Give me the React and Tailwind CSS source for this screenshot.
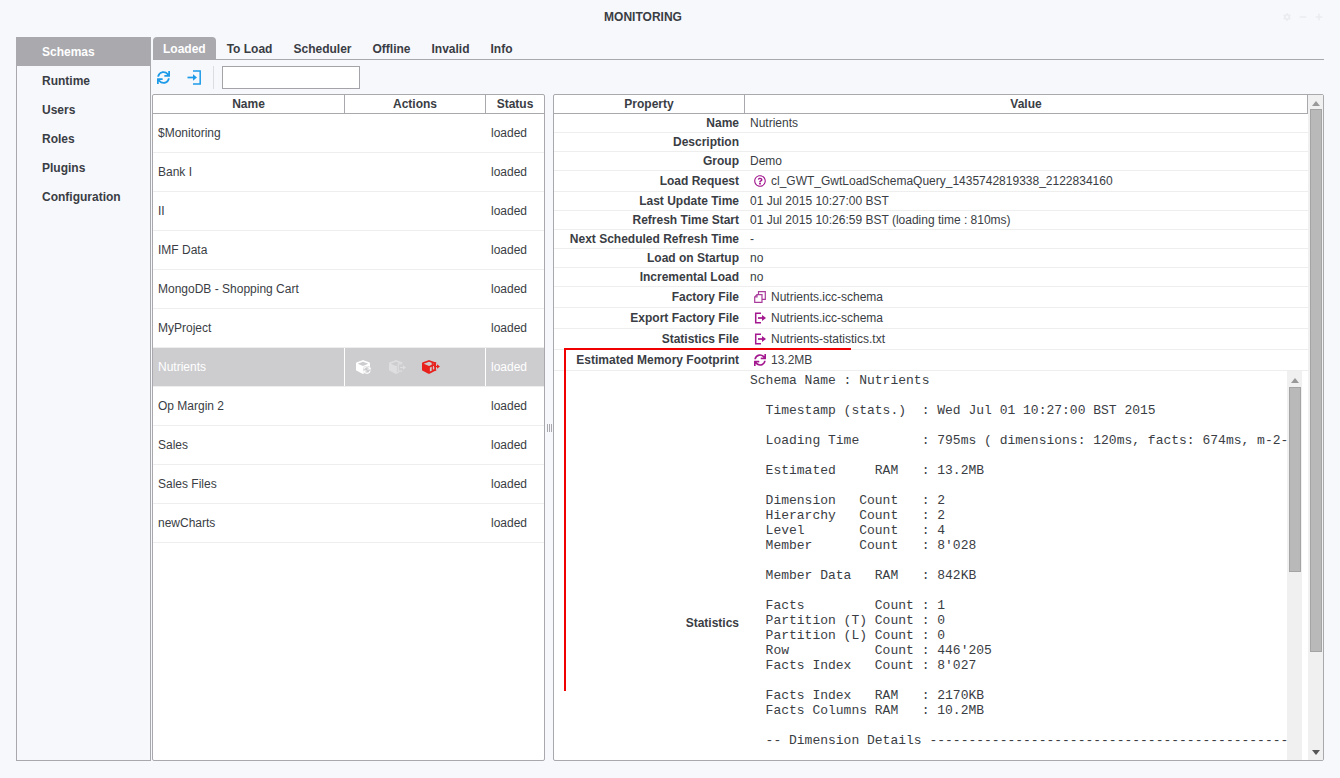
import { FaSync, FaRegQuestionCircle, FaCube, FaCog, FaMinus, FaPlus } from 'react-icons/fa';

const menu = ['Schemas', 'Runtime', 'Users', 'Roles', 'Plugins', 'Configuration'];
const tabs = ['Loaded', 'To Load', 'Scheduler', 'Offline', 'Invalid', 'Info'];
const schemas = ['$Monitoring', 'Bank I', 'II', 'IMF Data', 'MongoDB - Shopping Cart', 'MyProject', 'Nutrients', 'Op Margin 2', 'Sales', 'Sales Files', 'newCharts'];

const purple = 'text-[#a3178f]';

// bracket opening right with an arrow leaving it
function ExportIcon({ className }) {
  return (
    <svg width="12" height="12" viewBox="0 0 12 12" className={className} fill="none" stroke="currentColor">
      <path d="M7 1.2H1.7v9.6H7" strokeWidth="1.5" />
      <path d="M4 6h5" strokeWidth="1.7" />
      <polygon points="8,3 12,6 8,9" fill="currentColor" stroke="none" />
    </svg>
  );
}

// arrow going into a bracket that opens left
function ImportIcon({ className }) {
  return (
    <svg width="15" height="15" viewBox="0 0 15 15" className={className} fill="none" stroke="currentColor">
      <path d="M6 1h7.2v13H6" strokeWidth="1.5" />
      <path d="M0.5 7.5h6" strokeWidth="1.7" />
      <polygon points="6,4.2 10,7.5 6,10.8" fill="currentColor" stroke="none" />
    </svg>
  );
}

function CopyIcon({ className }) {
  return (
    <svg width="12" height="12" viewBox="0 0 12 12" className={className} fill="none" stroke="currentColor" strokeWidth="1.2">
      <path d="M4.5 3.5V0.7h6.8v7.6H8" />
      <path d="M3 3.7h5v7.6H0.7V6z" />
      <path d="M0.7 6H3V3.7" />
    </svg>
  );
}

const props = [
  { label: 'Name', value: 'Nutrients' },
  { label: 'Description', value: '' },
  { label: 'Group', value: 'Demo' },
  { label: 'Load Request', value: 'cl_GWT_GwtLoadSchemaQuery_1435742819338_2122834160', icon: <FaRegQuestionCircle size={12} className={purple} />, tall: true },
  { label: 'Last Update Time', value: '01 Jul 2015 10:27:00 BST' },
  { label: 'Refresh Time Start', value: '01 Jul 2015 10:26:59 BST (loading time : 810ms)' },
  { label: 'Next Scheduled Refresh Time', value: '-' },
  { label: 'Load on Startup', value: 'no' },
  { label: 'Incremental Load', value: 'no' },
  { label: 'Factory File', value: 'Nutrients.icc-schema', icon: <CopyIcon className="text-[#a93d9c]" />, tall: true },
  { label: 'Export Factory File', value: 'Nutrients.icc-schema', icon: <ExportIcon className={purple} />, tall: true },
  { label: 'Statistics File', value: 'Nutrients-statistics.txt', icon: <ExportIcon className={purple} />, tall: true },
  { label: 'Estimated Memory Footprint', value: '13.2MB', icon: <FaSync size={12} className={purple} />, tall: true },
];

const stats = `Schema Name : Nutrients

  Timestamp (stats.)  : Wed Jul 01 10:27:00 BST 2015

  Loading Time        : 795ms ( dimensions: 120ms, facts: 674ms, m-2-m: 0ms )

  Estimated     RAM   : 13.2MB

  Dimension   Count   : 2
  Hierarchy   Count   : 2
  Level       Count   : 4
  Member      Count   : 8'028

  Member Data   RAM   : 842KB

  Facts         Count : 1
  Partition (T) Count : 0
  Partition (L) Count : 0
  Row           Count : 446'205
  Facts Index   Count : 8'027

  Facts Index   RAM   : 2170KB
  Facts Columns RAM   : 10.2MB

  -- Dimension Details ----------------------------------------------------------------`;

function Arrow({ down }) {
  return (
    <svg width="8" height="5" viewBox="0 0 8 5" className={down ? 'text-[#555]' : 'text-[#999]'}>
      <polygon points={down ? '0,0 8,0 4,5' : '4,0 8,5 0,5'} fill="currentColor" />
    </svg>
  );
}

function CubeAction({ className, children }) {
  return (
    <span className={`relative flex h-[14px] w-[18px] items-center ${className}`}>
      <FaCube size={14} />
      {children}
    </span>
  );
}

export default function App() {
  return (
    <div className="relative h-screen overflow-hidden bg-[#f7f8fc] font-['Liberation_Sans',Arial,sans-serif] text-[12px] text-[#3a3d44]">
      <div className="relative flex h-[37px] items-start justify-center pr-[54px] pt-[10px] text-[12px] font-bold leading-[15px]">
        MONITORING
        <div className="absolute right-[17px] top-[13px] flex items-center gap-[8px] text-[#ebecf0]">
          <FaCog size={8} />
          <FaMinus size={8} />
          <FaPlus size={8} />
        </div>
      </div>

      <div className="flex h-[724px] pl-[16px] pr-[16px]">
        <div className="w-[135px] shrink-0 rounded-t-[2px] border-x border-b border-[#a9a9ad] font-bold">
          {menu.map((m, i) => (
            <div key={m} className={`flex h-[29px] items-center pl-[25px] ${i === 0 ? '-mx-px bg-[#a9a9ae] pl-[26px] text-white' : ''}`}>
              {m}
            </div>
          ))}
        </div>

        <div className="ml-px flex min-w-0 flex-1 flex-col">
          <div className="ml-px flex h-[23px] shrink-0 border-b border-[#a9a9ad] font-bold">
            {tabs.map((t, i) => (
              <div key={t} className={`mr-px flex h-[22px] items-center rounded-t-[4px] px-[10px] pt-px ${i === 0 ? 'bg-[#a9a9ae] text-white' : ''}`}>
                {t}
              </div>
            ))}
          </div>

          <div className="flex h-[34px] shrink-0 items-center pl-[5px] text-[#1e9be8]">
            <FaSync size={13} />
            <ImportIcon className="ml-[17px]" />
            <div className="ml-[11px] h-[23px] w-px bg-[#dcdde0]" />
            <div className="ml-[8px] h-[23px] w-[138px] border border-[#a4a4a8] bg-white" />
          </div>

          <div className="flex min-h-0 flex-1">
            {/* schema list */}
            <div className="w-[393px] shrink-0 overflow-hidden rounded-[2px] border border-[#a9a9ad] bg-white">
              <div className="grid h-[19px] grid-cols-[192px_141px_1fr] border-b border-[#a9a9ad] font-bold leading-[18px]">
                <div className="border-r border-[#a9a9ad] text-center">Name</div>
                <div className="border-r border-[#a9a9ad] text-center">Actions</div>
                <div className="text-center">Status</div>
              </div>
              {schemas.map((s) => {
                const sel = s === 'Nutrients';
                return (
                  <div key={s} className={`grid h-[39px] grid-cols-[192px_141px_1fr] border-b border-[#eeeeee] ${sel ? 'bg-[#cdcdd0] text-white' : ''}`}>
                    <div className={`flex items-center pl-[5px] ${sel ? 'border-r border-white' : ''}`}>{s}</div>
                    <div className={`flex items-center gap-[15px] pl-[11px] ${sel ? 'border-r border-white' : ''}`}>
                      {sel && (
                        <>
                          <CubeAction className="text-white">
                            <FaSync size={8} className="absolute left-[7px] top-[6px] rounded-full bg-[#cdcdd0] text-white" />
                          </CubeAction>
                          <CubeAction className="text-[#dedee0]">
                            <ExportIcon className="absolute left-[8px] top-[3px] h-[9px] w-[9px] bg-[#cdcdd0] text-[#dedee0]" />
                          </CubeAction>
                          <CubeAction className="text-[#e8211d]">
                            <ExportIcon className="absolute left-[9px] top-[2px] h-[9px] w-[9px] text-[#e8211d]" />
                          </CubeAction>
                        </>
                      )}
                    </div>
                    <div className="flex items-center pl-[5px]">loaded</div>
                  </div>
                );
              })}
            </div>

            {/* splitter */}
            <div className="flex w-[8px] shrink-0 items-center justify-center gap-px">
              <span className="h-[8px] w-px bg-[#a9a9ad]" />
              <span className="h-[8px] w-px bg-[#a9a9ad]" />
              <span className="h-[8px] w-px bg-[#a9a9ad]" />
            </div>

            {/* properties */}
            <div className="flex min-w-0 flex-1 overflow-hidden rounded-[2px] border border-[#a9a9ad] bg-white">
              <div className="min-w-0 flex-1 overflow-hidden">
                <div className="grid h-[19px] grid-cols-[191px_1fr] border-b border-r border-[#a9a9ad] font-bold leading-[18px]">
                  <div className="border-r border-[#a9a9ad] text-center">Property</div>
                  <div className="text-center">Value</div>
                </div>
                {props.map((p) => (
                  <div key={p.label} className={`grid grid-cols-[191px_1fr] border-b border-[#eeeeee] ${p.tall ? 'h-[21px]' : 'h-[19px]'}`}>
                    <div className="flex items-center justify-end pr-[6px] font-bold">{p.label}</div>
                    <div className={`flex items-center ${p.icon ? 'gap-[5px] pl-[9px]' : 'pl-[5px]'}`}>
                      {p.icon}
                      <span>{p.value}</span>
                    </div>
                  </div>
                ))}
                <div className="grid h-[504px] grid-cols-[191px_1fr]">
                  <div className="flex items-center justify-end pr-[6px] font-bold">Statistics</div>
                  <div className="flex min-w-0 pr-[6px]">
                    <pre className="min-w-0 flex-1 overflow-hidden pl-[5px] pt-[2px] font-['Liberation_Mono','Courier_New',monospace] text-[13px] leading-[15px]">{stats}</pre>
                    <div className="flex w-[15px] shrink-0 flex-col items-center bg-[#f0f0f0] pt-[7px]">
                      <Arrow />
                      <div className="mt-[4px] h-[185px] w-[12px] border border-[#a4a4a4] bg-[#b9b9b9]" />
                    </div>
                  </div>
                </div>
              </div>
              <div className="flex w-[15px] shrink-0 flex-col items-center bg-[#f0f0f0] pt-[6px]">
                <Arrow />
                <div className="mt-[3px] h-[543px] w-[12px] border border-[#a4a4a4] bg-[#b9b9b9]" />
                <div className="mt-auto mb-[5px]"><Arrow down /></div>
              </div>
            </div>
          </div>
        </div>
      </div>

      {/* red annotation */}
      <div className="absolute left-[564px] top-[348px] h-[2px] w-[287px] bg-[#f00000]" />
      <div className="absolute left-[564px] top-[348px] h-[343px] w-[2px] bg-[#f00000]" />
    </div>
  );
}
